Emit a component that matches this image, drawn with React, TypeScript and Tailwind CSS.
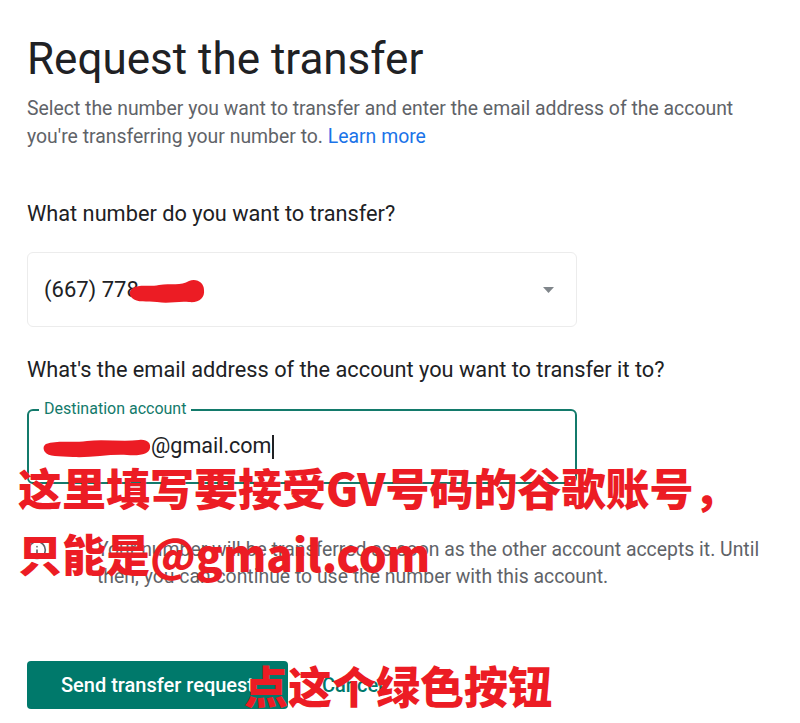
import React from 'react';
import { Info } from 'lucide-react';

const ui = { fontFamily: 'Roboto, "Liberation Sans", Arial, sans-serif' };
const cjk = { fontFamily: '"Noto Sans CJK SC", "Noto Sans", sans-serif' };

// red marker scribble used to hide personal data
function Scribble({ w, h, d }: { w: number; h: number; d: string }) {
  return (
    <svg width={w} height={h} viewBox={`0 0 ${w} ${h}`} className="inline-block align-middle shrink-0">
      <path d={d} fill="#ec1c24" />
    </svg>
  );
}

export default function App() {
  return (
    <div className="relative min-h-screen w-[800px] overflow-hidden bg-white" style={ui}>
      <div className="w-[790px] pl-[27px] pt-[33px]">
        <h1 className="text-[44px] leading-[52px] font-normal text-[#202124]">Request the transfer</h1>
        <p className="mt-[10px] w-[725px] text-[19.4px] leading-[28px] text-[#5f6368]">
          Select the number you want to transfer and enter the email address of the account you're transferring your
          number to. <span className="text-[#1a73e8]">Learn more</span>
        </p>

        <p className="mt-[49px] text-[21.75px] leading-[28px] text-[#202124]">What number do you want to transfer?</p>

        {/* number select */}
        <div className="mt-6 flex h-[75px] w-[550px] items-center justify-between rounded-md border border-[#ececec] pl-4 pr-[22px]">
          <div className="flex items-center text-[22px] text-[#202124]">
            <span>(667) 778</span>
            <span className="-ml-[10px]">
              <Scribble
                w={76}
                h={27}
                d="M4 10 C10 6 20 9 30 7 C42 5 52 8 60 3 C68 0 75 5 75 12 C76 20 70 25 60 24 C48 23 40 26 28 24 C18 23 8 25 3 20 C0 17 0 12 4 10 Z"
              />
            </span>
          </div>
          <svg width="11" height="6" viewBox="0 0 11 6">
            <path d="M0 0 H11 L5.5 6 Z" fill="#80868b" />
          </svg>
        </div>

        <p className="mt-[29px] text-[21.75px] leading-[28px] text-[#202124]">
          What's the email address of the account you want to transfer it to?
        </p>

        {/* destination input */}
        <div className="relative mt-[25px] flex h-[75px] w-[550px] items-center rounded-md border-2 border-[#137a6b] pl-[14px]">
          <span className="absolute -top-[12px] left-[10px] bg-white px-[5px] text-[16px] leading-[20px] text-[#137a6b]">
            Destination account
          </span>
          <div className="flex items-center text-[21.5px] text-[#202124]">
            <Scribble
              w={108}
              h={24}
              d="M3 9 C14 5 28 8 44 6 C60 4 80 7 96 5 C104 4 108 8 107 13 C106 19 98 21 84 20 C66 19 48 23 30 22 C16 21 5 22 2 17 C0 14 0 11 3 9 Z"
            />
            <span>@gmail.com</span>
            <span className="ml-[1px] h-[24px] w-[1.5px] bg-[#202124]" />
          </div>
        </div>

        {/* info */}
        <div className="mt-[52px] flex gap-[50px]">
          <Info className="mt-[4px] h-5 w-5 shrink-0 text-[#5f6368]" strokeWidth={2} />
          <p className="w-[680px] text-[19.4px] leading-[27px] text-[#5f6368]">
            Your number will be transferred as soon as the other account accepts it. Until then, you can continue to use
            the number with this account.
          </p>
        </div>

        {/* actions */}
        <div className="mt-[71px] flex items-center">
          <button className="h-12 w-[261px] rounded bg-[#00796b] text-[20px] font-medium text-white">
            Send transfer request
          </button>
          <button className="ml-[34px] text-[20px] font-medium text-[#00796b]">Cancel</button>
        </div>
      </div>

      {/* red annotations */}
      <div
        className="absolute left-[18px] top-[461px] whitespace-nowrap text-[44px] font-black leading-[52px] text-[#ec1c24]"
        style={cjk}
      >
        这里填写要接受GV号码的谷歌账号，
      </div>
      <div
        className="absolute left-[18px] top-[527px] whitespace-nowrap text-[44px] font-black leading-[52px] text-[#ec1c24]"
        style={cjk}
      >
        只能是@gmail.com
      </div>
      <div
        className="absolute left-[244px] top-[659px] whitespace-nowrap text-[44px] font-black leading-[52px] text-[#ec1c24]"
        style={cjk}
      >
        点这个绿色按钮
      </div>
    </div>
  );
}
